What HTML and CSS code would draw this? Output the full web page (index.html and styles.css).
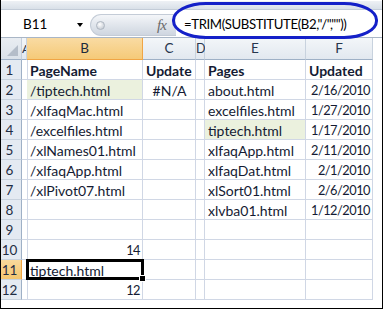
FILE: index.html
```html
<!DOCTYPE html>
<html>
<head>
<meta charset="utf-8">
<link rel="stylesheet" href="styles.css">
</head>
<body>
<div class="frame">
  <div class="ribbon"></div>
  <div class="fbar">
    <div class="namebox"><span class="ref">B11</span><span class="arrow"></span></div>
    <div class="pill"><span class="knob"></span><span class="fx">fx</span></div>
    <div class="formula">=TRIM(SUBSTITUTE(B2,"/",""))</div>
  </div>
  <div class="sheet">
    <div class="corner"><span class="tri"></span></div>
    <div class="ch cha">A</div>
    <div class="ch sel">B</div>
    <div class="ch">C</div>
    <div class="ch chd">D</div>
    <div class="ch">E</div>
    <div class="ch">F</div>

    <div class="rh">1</div><div class="c"></div><div class="c b">PageName</div><div class="c b">Update</div><div class="c"></div><div class="c b">Pages</div><div class="c b">Updated</div>
    <div class="rh">2</div><div class="c"></div><div class="c hl">/tiptech.html</div><div class="c ctr">#N/A</div><div class="c"></div><div class="c">about.html</div><div class="c r">2/16/2010</div>
    <div class="rh">3</div><div class="c"></div><div class="c">/xlfaqMac.html</div><div class="c"></div><div class="c"></div><div class="c">excelfiles.html</div><div class="c r">1/27/2010</div>
    <div class="rh">4</div><div class="c"></div><div class="c">/excelfiles.html</div><div class="c"></div><div class="c"></div><div class="c hl">tiptech.html</div><div class="c r">1/17/2010</div>
    <div class="rh">5</div><div class="c"></div><div class="c">/xlNames01.html</div><div class="c"></div><div class="c"></div><div class="c">xlfaqApp.html</div><div class="c r">2/11/2010</div>
    <div class="rh">6</div><div class="c"></div><div class="c">/xlfaqApp.html</div><div class="c"></div><div class="c"></div><div class="c">xlfaqDat.html</div><div class="c r">2/1/2010</div>
    <div class="rh">7</div><div class="c"></div><div class="c">/xlPivot07.html</div><div class="c"></div><div class="c"></div><div class="c">xlSort01.html</div><div class="c r">2/6/2010</div>
    <div class="rh">8</div><div class="c"></div><div class="c"></div><div class="c"></div><div class="c"></div><div class="c">xlvba01.html</div><div class="c r">1/12/2010</div>
    <div class="rh">9</div><div class="c"></div><div class="c"></div><div class="c"></div><div class="c"></div><div class="c"></div><div class="c"></div>
    <div class="rh">10</div><div class="c"></div><div class="c r">14</div><div class="c"></div><div class="c"></div><div class="c"></div><div class="c"></div>
    <div class="rh rsel">11</div><div class="c"></div><div class="c active">tiptech.html<span class="handle"></span></div><div class="c"></div><div class="c"></div><div class="c"></div><div class="c"></div>
    <div class="rh">12</div><div class="c"></div><div class="c r">12</div><div class="c"></div><div class="c"></div><div class="c"></div><div class="c"></div>
  </div>
  <div class="oval"></div>
</div>
</body>
</html>
```

FILE: styles.css
```css
html, body {
  margin: 0;
  padding: 0;
  background: #fff;
}

.frame {
  position: relative;
  width: 383px;
  height: 309px;
  box-sizing: border-box;
  border: 1px solid #000;
  border-top: none;
  background: #fff;
  overflow: hidden;
  font-family: Lato, "Open Sans", sans-serif;
  color: #141b33;
}

.ribbon {
  height: 10px;
  background: linear-gradient(#eef1f5, #d9e0e8);
  border-top: 1px solid #fff;
  box-sizing: border-box;
  border-bottom: 1px solid #c3ccd8;
}

.fbar {
  height: 28px;
  display: flex;
  align-items: flex-start;
  background: #fff;
  border-bottom: 1px solid #a9b6c6;
  box-sizing: border-box;
}

.namebox {
  width: 89px;
  height: 27px;
  display: flex;
  align-items: center;
  box-sizing: border-box;
  padding-left: 22px;
  font-size: 13.5px;
  color: #000;
}

.ref {
  width: 54px;
}

.arrow {
  width: 0;
  height: 0;
  border-left: 3.5px solid transparent;
  border-right: 3.5px solid transparent;
  border-top: 4px solid #000;
  margin-top: 2px;
}

.pill {
  margin-top: 4px;
  width: 86px;
  height: 22px;
  box-sizing: border-box;
  border-radius: 11px 0 0 11px;
  background: linear-gradient(#f4f6f9, #dfe4eb 55%, #cfd6e0);
  border: 1px solid #c4ccd7;
  border-right: none;
  display: flex;
  align-items: center;
  padding-left: 5px;
}

.knob {
  width: 9px;
  height: 9px;
  border-radius: 50%;
  background: radial-gradient(circle at 40% 35%, #ffffff, #b9c0ca);
  border: 1px solid #aeb6c1;
  box-sizing: border-box;
}

.fx {
  margin-left: 52px;
  font-family: "Liberation Serif", serif;
  font-style: italic;
  font-size: 15px;
  color: #6a6a6a;
  letter-spacing: -1px;
}

.formula {
  flex: 1;
  padding-left: 8px;
  padding-top: 6px;
  font-size: 13.2px;
  letter-spacing: -0.4px;
  color: #000;
  white-space: nowrap;
}

.sheet {
  display: grid;
  grid-template-columns: 21px 5px 116px 53px 9px 101px 67px;
  grid-template-rows: 22px repeat(12, 20px);
}

.corner {
  position: relative;
  background: linear-gradient(#e9edf2, #dae1e9);
  border-right: 1px solid #c5cfdb;
  border-bottom: 1px solid #9eb0c6;
}

.tri {
  position: absolute;
  right: 3px;
  bottom: 3px;
  width: 0;
  height: 0;
  border-left: 11px solid transparent;
  border-bottom: 11px solid #b4bdc9;
}

.ch {
  background: linear-gradient(#f3f6f9, #e2e8ef);
  border-right: 1px solid #c8d2de;
  border-bottom: 1px solid #9eb0c6;
  box-sizing: border-box;
  font-size: 13.5px;
  color: #27364d;
  text-align: center;
  line-height: 21px;
  overflow: hidden;
}

.cha {
  text-align: left;
  font-size: 12px;
  overflow: hidden;
}

.chd {
  text-align: left;
  font-size: 12.5px;
  padding-left: 0;
  overflow: visible;
}

.ch.sel {
  background: linear-gradient(#f9dba3, #f5ca78);
  border-right: 1px solid #f0a545;
  border-bottom: 1px solid #f0a545;
  color: #1e2a3c;
}

.rh {
  background: #e4eaf2;
  border-right: 1px solid #9eb0c6;
  border-bottom: 1px solid #c8d2de;
  box-sizing: border-box;
  font-size: 13.5px;
  color: #1f2d44;
  text-align: center;
  padding-right: 3px;
  line-height: 21px;
}

.rh.rsel {
  background: linear-gradient(#f9d99c, #f5c66f);
  border-right: 1px solid #f0a545;
}

.c {
  position: relative;
  border-right: 1px solid #d0d7e5;
  border-bottom: 1px solid #d0d7e5;
  box-sizing: border-box;
  font-size: 14px;
  line-height: 21px;
  padding: 0 2px 0 3px;
  white-space: nowrap;
  overflow: visible;
}

.b {
  font-weight: bold;
}

.r {
  text-align: right;
  font-size: 12.8px;
  letter-spacing: -0.5px;
  padding-right: 2px;
  padding-left: 0;
}

.ctr {
  text-align: center;
}

.hl {
  background: #ebf1de;
}

.active::after {
  content: "";
  position: absolute;
  left: -1px;
  top: -1px;
  right: -2px;
  bottom: -1px;
  border: 3px solid #000;
}

.handle {
  position: absolute;
  right: -4px;
  bottom: -3px;
  width: 5px;
  height: 5px;
  background: #000;
  border: 1px solid #fff;
  z-index: 2;
}

.oval {
  position: absolute;
  left: 171px;
  top: 2px;
  width: 206px;
  height: 37px;
  box-sizing: border-box;
  border: 3px solid #1420c8;
  border-radius: 34px / 18px;
  pointer-events: none;
}
```
